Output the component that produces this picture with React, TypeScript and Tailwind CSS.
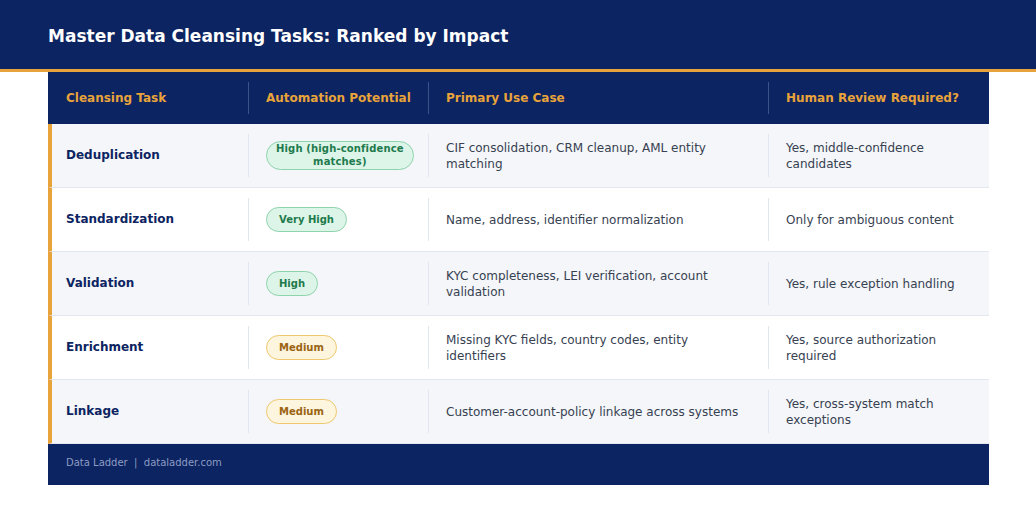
import React from "react";

type Row = {
  task: string;
  level: "green" | "amber";
  badge: React.ReactNode;
  long?: boolean;
  use: string;
  review: string;
};

const rows: Row[] = [
  { task: "Deduplication", level: "green", long: true, badge: (<>High (high-confidence<br />matches)</>), use: "CIF consolidation, CRM cleanup, AML entity matching", review: "Yes, middle-confidence candidates" },
  { task: "Standardization", level: "green", badge: "Very High", use: "Name, address, identifier normalization", review: "Only for ambiguous content" },
  { task: "Validation", level: "green", badge: "High", use: "KYC completeness, LEI verification, account validation", review: "Yes, rule exception handling" },
  { task: "Enrichment", level: "amber", badge: "Medium", use: "Missing KYC fields, country codes, entity identifiers", review: "Yes, source authorization required" },
  { task: "Linkage", level: "amber", badge: "Medium", use: "Customer-account-policy linkage across systems", review: "Yes, cross-system match exceptions" },
];

export default function App() {
  return (
    <div className="w-[1036px] h-[532px] bg-white" style={{ fontFamily: '"DejaVu Sans", "Liberation Sans", sans-serif' }}>
      <div className="h-[72px] bg-[#0c2461] border-b-[3px] border-[#e8a33b] flex items-center pl-[48px] pt-[3px]">
        <h1 className="text-[17px] font-bold text-white leading-none">Master Data Cleansing Tasks: Ranked by Impact</h1>
      </div>
      <div className="ml-[48px] w-[941px]">
        <div className="flex h-[52px] bg-[#0c2461] py-[10px] text-[12px] font-bold text-[#e8a33b] whitespace-nowrap">
          <div className="w-[200px] flex items-center px-[18px]">Cleansing Task</div>
          <div className="w-[180px] flex items-center pl-[17px] pr-[12px] border-l border-[#3a5189]">Automation Potential</div>
          <div className="w-[340px] flex items-center pl-[17px] pr-[18px] border-l border-[#3a5189]">Primary Use Case</div>
          <div className="w-[221px] flex items-center pl-[17px] pr-[12px] border-l border-[#3a5189]">Human Review Required?</div>
        </div>
        {rows.map((r, i) => (
          <div
            key={r.task}
            className={`flex h-[64px] py-[10px] border-l-4 border-l-[#e8a33b] border-b border-b-[#e2e6ee] ${i % 2 === 0 ? "bg-[#f4f6f9]" : "bg-white"}`}
          >
            <div className="w-[196px] flex items-center px-[14px] pb-[1px] text-[12px] font-bold text-[#0c2461]">{r.task}</div>
            <div className="w-[180px] flex items-center pl-[17px] pr-[8px] border-l border-[#e2e6ee]">
              <span
                className={`rounded-full border whitespace-nowrap font-bold text-center text-[10px] ${
                  r.long ? "px-[9px] py-[1px] leading-[12.5px] tracking-[0.15px]" : "px-[12px] h-[25px] leading-[23px]"
                } ${
                  r.level === "green"
                    ? "bg-[#dcf5e8] border-[#8fd3ad] text-[#1e7a4c]"
                    : "bg-[#fdf5de] border-[#eec86f] text-[#9a6414]"
                }`}
              >
                {r.badge}
              </span>
            </div>
            <div className="w-[340px] flex items-center pl-[17px] pr-[18px] border-l border-[#e2e6ee] text-[12px] leading-[16px] text-[#374151]">{r.use}</div>
            <div className="w-[221px] flex items-center pl-[17px] pr-[18px] border-l border-[#e2e6ee] text-[12px] leading-[16px] text-[#374151]">{r.review}</div>
          </div>
        ))}
        <div className="h-[41px] bg-[#0c2461] flex items-center px-[18px] pb-[4px] text-[10px] text-[#8d9cc4]">
          Data Ladder&nbsp;&nbsp;|&nbsp;&nbsp;dataladder.com
        </div>
      </div>
    </div>
  );
}
